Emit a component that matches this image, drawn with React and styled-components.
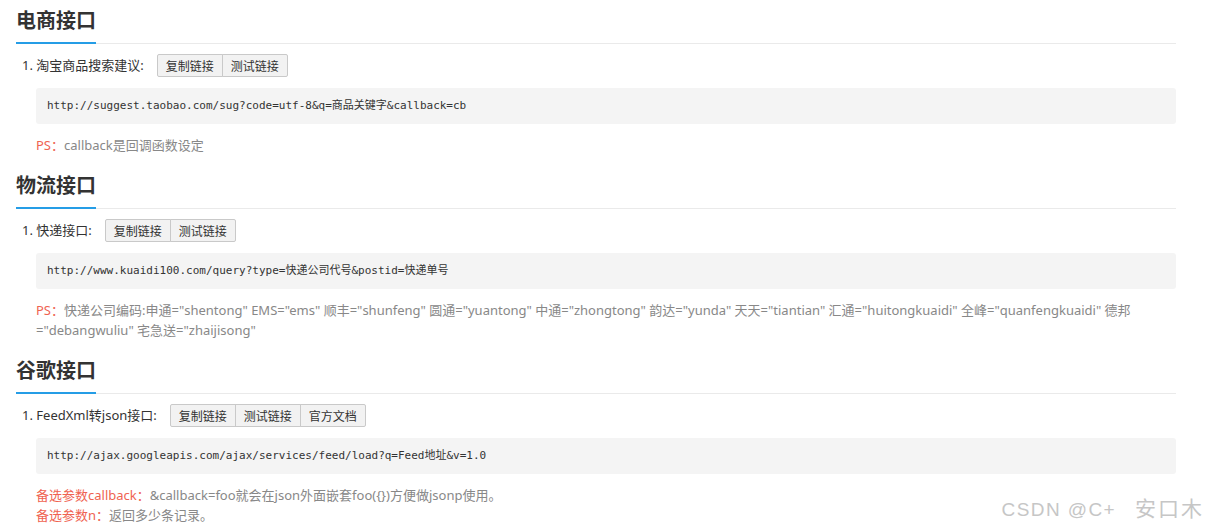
import React from 'react'
import styled, { createGlobalStyle } from 'styled-components'

const GlobalStyle = createGlobalStyle`
	html, body {
		margin: 0;
		padding: 0;
		background: #fff;
	}
	body {
		font-family: "Noto Sans", "Noto Sans CJK SC", sans-serif;
		color: #333;
	}
`

const Page = styled.div`
	position: relative;
	width: 1208px;
	height: 532px;
	padding: 7px 32px 0 16px;
	box-sizing: border-box;
	overflow: hidden;
`

const Section = styled.section`
	& + & {
		margin-top: 17px;
	}
`

const Heading = styled.h2`
	margin: 0;
	border-bottom: 1px solid #eaeaea;
	font-size: 20px;
	font-weight: 700;
	line-height: 28px;
	color: #333;

	span {
		display: inline-block;
		padding-bottom: 7px;
		margin-bottom: -1px;
		border-bottom: 2px solid #259de6;
	}
`

const Item = styled.div`
	display: flex;
	align-items: center;
	height: 23px;
	margin-top: 10px;
	padding-left: 6px;
	font-size: 13px;
	line-height: 23px;
	color: #333;

	.label {
		margin-right: 13px;
	}
`

const ButtonGroup = styled.div`
	display: flex;
`

const Button = styled.button`
	height: 23px;
	padding: 0 8px;
	margin: 0;
	border: 1px solid #c9c9c9;
	background: #f2f2f2;
	font-family: "Noto Sans CJK SC", sans-serif;
	font-size: 12px;
	line-height: 21px;
	color: #333;
	cursor: pointer;

	& + & {
		margin-left: -1px;
	}
	&:first-child {
		border-radius: 2px 0 0 2px;
	}
	&:last-child {
		border-radius: 0 2px 2px 0;
	}
`

const Code = styled.pre`
	margin: 11px 0 0 20px;
	padding: 11px 11px;
	background: #f4f4f4;
	border-radius: 3px;
	font-family: "DejaVu Sans Mono", "Noto Sans CJK SC", monospace;
	font-size: 11px;
	line-height: 14px;
	color: #333;
	white-space: pre-wrap;
`

const Note = styled.p`
	margin: ${p => (p.$first ? '11px' : '0')} 0 0 20px;
	font-size: 13px;
	line-height: 20px;
	color: #888;

	em {
		font-style: normal;
		color: #ef6351;
	}
`

const Watermark = styled.div`
	position: absolute;
	right: 4px;
	bottom: 10px;
	font-family: "Liberation Sans", Arial, "Noto Sans CJK SC", sans-serif;
	font-size: 19px;
	letter-spacing: 1.4px;
	color: #c6c6c6;

	span {
		margin-left: 19px;
		font-size: 21px;
		letter-spacing: 2px;
	}
`

const sections = [
	{
		title: '电商接口',
		label: '淘宝商品搜索建议:',
		buttons: ['复制链接', '测试链接'],
		code: 'http://suggest.taobao.com/sug?code=utf-8&q=商品关键字&callback=cb',
		notes: [['PS：', 'callback是回调函数设定']]
	},
	{
		title: '物流接口',
		label: '快递接口:',
		buttons: ['复制链接', '测试链接'],
		code: 'http://www.kuaidi100.com/query?type=快递公司代号&postid=快递单号',
		notes: [['PS：', '快递公司编码:申通="shentong" EMS="ems" 顺丰="shunfeng" 圆通="yuantong" 中通="zhongtong" 韵达="yunda" 天天="tiantian" 汇通="huitongkuaidi" 全峰="quanfengkuaidi" 德邦="debangwuliu" 宅急送="zhaijisong"']]
	},
	{
		title: '谷歌接口',
		label: 'FeedXml转json接口:',
		buttons: ['复制链接', '测试链接', '官方文档'],
		code: 'http://ajax.googleapis.com/ajax/services/feed/load?q=Feed地址&v=1.0',
		notes: [
			['备选参数callback：', '&callback=foo就会在json外面嵌套foo({})方便做jsonp使用。'],
			['备选参数n：', '返回多少条记录。']
		]
	}
]

const App = () => (
	<Page>
		<GlobalStyle />
		{sections.map(s => (
			<Section key={s.title}>
				<Heading><span>{s.title}</span></Heading>
				<Item>
					<span className="label">1. {s.label}</span>
					<ButtonGroup>
						{s.buttons.map(b => <Button key={b}>{b}</Button>)}
					</ButtonGroup>
				</Item>
				<Code>{s.code}</Code>
				{s.notes.map(([k, v], i) => (
					<Note key={k} $first={i === 0}><em>{k}</em>{v}</Note>
				))}
			</Section>
		))}
		<Watermark>CSDN @C+<span>安口木</span></Watermark>
	</Page>
)

export default App
